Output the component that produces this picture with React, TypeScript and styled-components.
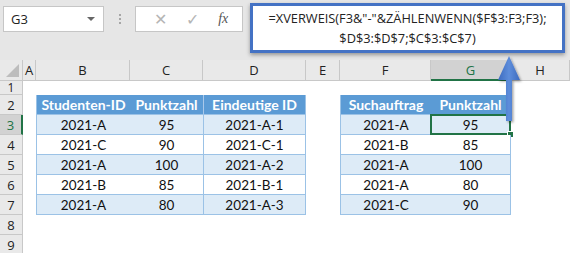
import React from "react";
import styled, { createGlobalStyle, css } from "styled-components";

const Global = createGlobalStyle`
  html, body { margin: 0; padding: 0; background: #ffffff; }
  body { width: 570px; height: 253px; overflow: hidden; }
`;

const Page = styled.div`
  position: relative;
  width: 570px;
  height: 253px;
  overflow: hidden;
  background: #ffffff;
  font-family: Lato, "Open Sans", sans-serif;
`;

const Toolbar = styled.div`
  height: 60px;
  box-sizing: border-box;
  background: #e6e6e6;
  display: flex;
  align-items: flex-start;
  padding: 6px 0 0 3px;
`;

const NameBox = styled.div`
  width: 101px;
  height: 26px;
  box-sizing: border-box;
  background: #ffffff;
  border: 1px solid #c6c6c6;
  display: flex;
  align-items: center;
  justify-content: space-between;
  padding: 0 8px 0 7px;
  font-family: "Open Sans", sans-serif;
  font-size: 13px;
  color: #222;
`;

const Caret = styled.span`
  width: 0;
  height: 0;
  border-left: 4px solid transparent;
  border-right: 4px solid transparent;
  border-top: 4px solid #666;
`;

const Grip = styled.div`
  width: 31px;
  height: 26px;
  display: flex;
  flex-direction: column;
  align-items: center;
  justify-content: center;
  gap: 2px;
  & > span {
    width: 2px;
    height: 2px;
    background: #a6a6a6;
  }
`;

const FxBox = styled.div`
  width: 108px;
  height: 26px;
  box-sizing: border-box;
  background: #ffffff;
  border: 1px solid #c6c6c6;
  display: flex;
  align-items: center;
  justify-content: space-around;
  padding: 0 4px 0 8px;
`;

const FxGlyph = styled.span<{ $italic?: boolean }>`
  color: #b5b5b5;
  font-size: 16px;
  line-height: 1;
  ${(p) =>
    p.$italic &&
    css`
      color: #555;
      font-family: "Liberation Serif", serif;
      font-style: italic;
      font-size: 14px;
    `}
`;

const FormulaBox = styled.div`
  margin: -3px 0 0 7px;
  width: 315px;
  height: 50px;
  box-sizing: border-box;
  background: #ffffff;
  border: 3px solid #4472c4;
  box-shadow: 0 2px 4px rgba(0, 0, 0, 0.35);
  font-family: "Open Sans", sans-serif;
  font-size: 12.8px;
  line-height: 20px;
  color: #222;
  text-align: center;
  padding-top: 2px;
  white-space: nowrap;
  position: relative;
  z-index: 2;
`;

const Sheet = styled.div`
  display: grid;
  grid-template-columns: 23px 13px 94px 73px 103px 34px 91px 80px 1fr;
  grid-template-rows: 21px 14px repeat(8, 20px);
`;

const HeadCell = styled.div<{ $active?: boolean; $row?: boolean; $short?: boolean }>`
  box-sizing: border-box;
  background: ${(p) => (p.$active ? "#d2d2d2" : "#e9e9e9")};
  border-right: 1px solid #c8c8c8;
  border-bottom: 1px solid #c8c8c8;
  display: flex;
  align-items: center;
  justify-content: center;
  font-family: "Open Sans", sans-serif;
  font-size: ${(p) => (p.$short ? "12px" : "13px")};
  line-height: 12px;
  color: ${(p) => (p.$active ? "#217346" : "#222")};
  ${(p) =>
    p.$active &&
    (p.$row
      ? css`
          border-right: 2px solid #217346;
        `
      : css`
          border-bottom: 2px solid #217346;
        `)}
`;

const Corner = styled.div`
  background: #e9e9e9;
  border-right: 1px solid #c8c8c8;
  border-bottom: 1px solid #c8c8c8;
  box-sizing: border-box;
  position: relative;
  &::after {
    content: "";
    position: absolute;
    right: 3px;
    bottom: 3px;
    width: 0;
    height: 0;
    border-left: 13px solid transparent;
    border-bottom: 13px solid #bdbdbd;
  }
`;

const Blank = styled.div``;

type Tone = "head" | "band" | "plain";

const DataCell = styled.div<{
  $tone: Tone;
  $left?: boolean;
  $right?: boolean;
  $divider?: boolean;
  $selected?: boolean;
}>`
  position: relative;
  box-sizing: border-box;
  display: flex;
  align-items: center;
  justify-content: center;
  font-size: 13.5px;
  color: #111;
  background: ${(p) =>
    p.$tone === "head" ? "#5b9bd5" : p.$tone === "band" ? "#ddebf7" : "#ffffff"};
  border-bottom: 1px solid #9bc2e6;
  ${(p) =>
    p.$tone === "head" &&
    css`
      color: #ffffff;
      font-weight: 700;
      font-size: 14px;
    `}
  ${(p) =>
    p.$left &&
    css`
      border-left: 1px solid #9bc2e6;
    `}
  ${(p) =>
    p.$right &&
    css`
      border-right: 1px solid #9bc2e6;
    `}
  ${(p) =>
    p.$divider &&
    css`
      border-left: 1px solid ${p.$tone === "head" ? "#a9c8ea" : "#9bc2e6"};
    `}
  ${(p) =>
    p.$selected &&
    css`
      &::before {
        content: "";
        position: absolute;
        left: -1px;
        top: -1px;
        right: -1px;
        bottom: -1px;
        border: 2px solid #217346;
      }
      &::after {
        content: "";
        position: absolute;
        right: -4px;
        bottom: -4px;
        width: 5px;
        height: 5px;
        background: #217346;
        border: 1px solid #ffffff;
      }
    `}
`;

const ArrowLayer = styled.svg`
  position: absolute;
  left: 494px;
  top: 53px;
  z-index: 3;
  overflow: visible;
`;

const COLS = ["A", "B", "C", "D", "E", "F", "G", "H"];

const left = {
  head: ["Studenten-ID", "Punktzahl", "Eindeutige ID"],
  rows: [
    ["2021-A", "95", "2021-A-1"],
    ["2021-C", "90", "2021-C-1"],
    ["2021-A", "100", "2021-A-2"],
    ["2021-B", "85", "2021-B-1"],
    ["2021-A", "80", "2021-A-3"],
  ],
};

const right = {
  head: ["Suchauftrag", "Punktzahl"],
  rows: [
    ["2021-A", "95"],
    ["2021-B", "85"],
    ["2021-A", "100"],
    ["2021-A", "80"],
    ["2021-C", "90"],
  ],
};

function renderRow(r: number) {
  const cells: React.ReactNode[] = [];
  cells.push(
    <HeadCell key="rh" $row $active={r === 3} $short={r === 1}>
      {r}
    </HeadCell>
  );
  cells.push(<Blank key="a" />);
  const idx = r - 2; // 0 = header
  if (r >= 2 && r <= 7) {
    const tone: Tone = idx === 0 ? "head" : idx % 2 === 1 ? "band" : "plain";
    const lv = idx === 0 ? left.head : left.rows[idx - 1];
    const rv = idx === 0 ? right.head : right.rows[idx - 1];
    cells.push(
      <DataCell key="b" $tone={tone} $left>
        {lv[0]}
      </DataCell>
    );
    cells.push(
      <DataCell key="c" $tone={tone}>
        {lv[1]}
      </DataCell>
    );
    cells.push(
      <DataCell key="d" $tone={tone} $divider $right>
        {lv[2]}
      </DataCell>
    );
    cells.push(<Blank key="e" />);
    cells.push(
      <DataCell key="f" $tone={tone} $left>
        {rv[0]}
      </DataCell>
    );
    cells.push(
      <DataCell key="g" $tone={tone} $right $selected={r === 3}>
        {rv[1]}
      </DataCell>
    );
    cells.push(<Blank key="h" />);
  } else {
    for (let i = 0; i < 7; i++) cells.push(<Blank key={"x" + i} />);
  }
  return cells;
}

export default function App() {
  return (
    <Page>
      <Global />
      <Toolbar>
        <NameBox>
          G3
          <Caret />
        </NameBox>
        <Grip>
          <span />
          <span />
          <span />
        </Grip>
        <FxBox>
          <FxGlyph>✕</FxGlyph>
          <FxGlyph>✓</FxGlyph>
          <FxGlyph $italic>fx</FxGlyph>
        </FxBox>
        <FormulaBox>
          =XVERWEIS(F3&amp;"-"&amp;ZÄHLENWENN($F$3:F3;F3);
          <br />
          $D$3:$D$7;$C$3:$C$7)
        </FormulaBox>
      </Toolbar>
      <Sheet>
        <Corner />
        {COLS.map((c) => (
          <HeadCell key={c} $active={c === "G"}>
            {c}
          </HeadCell>
        ))}
        {[1, 2, 3, 4, 5, 6, 7, 8, 9].map((r) => (
          <React.Fragment key={r}>{renderRow(r)}</React.Fragment>
        ))}
      </Sheet>
      <ArrowLayer width="30" height="72" viewBox="0 0 30 72">
        <defs>
          <linearGradient id="shaft" x1="0" x2="1" y1="0" y2="0">
            <stop offset="0" stopColor="#3d6bbf" />
            <stop offset="0.5" stopColor="#5d8ddb" />
            <stop offset="1" stopColor="#3d6bbf" />
          </linearGradient>
          <filter id="sh" x="-50%" y="-20%" width="200%" height="140%">
            <feDropShadow dx="1.5" dy="1.5" stdDeviation="1.2" floodColor="#000" floodOpacity="0.35" />
          </filter>
        </defs>
        <path
          d="M15 3 L26 27 L18 27 L18 68 L12 68 L12 27 L4 27 Z"
          fill="url(#shaft)"
          filter="url(#sh)"
        />
      </ArrowLayer>
    </Page>
  );
}
